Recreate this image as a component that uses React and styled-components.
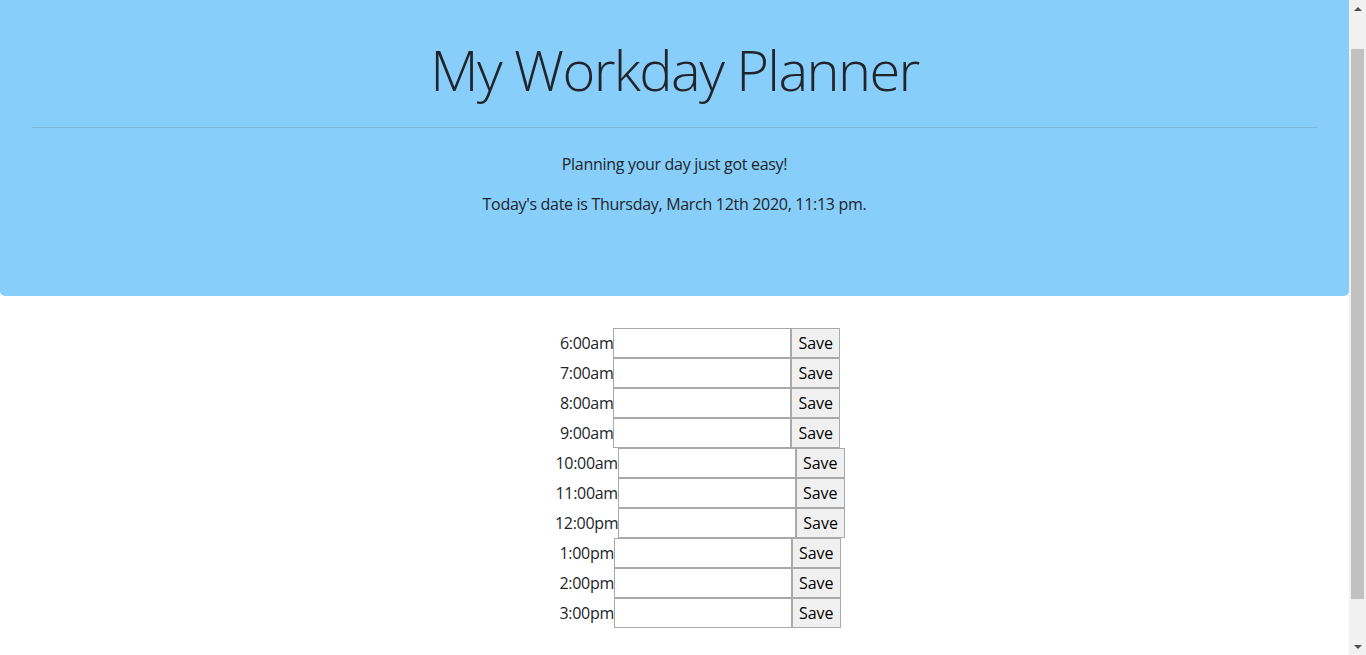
import React from "react";
import styled, { createGlobalStyle } from "styled-components";

const GlobalStyle = createGlobalStyle`
  html, body {
    margin: 0;
    padding: 0;
    background: #fff;
  }
  body {
    font-family: "Open Sans", "Noto Sans", "Liberation Sans", sans-serif;
    font-size: 16px;
    line-height: 1.5;
    color: #212529;
    letter-spacing: -0.3px;
  }
  * { box-sizing: border-box; }
`;

const Page = styled.div`
  padding-right: 17px;
`;

const Jumbotron = styled.header`
  background: #87cefa;
  padding: 36px 32px 64px;
  margin-bottom: 32px;
  border-radius: 0 0 4.8px 4.8px;
  text-align: center;
`;

const Title = styled.h1`
  margin: 0;
  font-size: 56px;
  font-weight: 300;
  line-height: 1.2;
  letter-spacing: -1.6px;
`;

const Divider = styled.hr`
  margin: 24px 0;
  border: 0;
  border-top: 1px solid rgba(0, 0, 0, 0.1);
`;

const Lead = styled.p`
  margin: 0 0 16px;
  font-size: 16px;
`;

const Planner = styled.main`
  display: flex;
  flex-direction: column;
  align-items: center;
  padding: 0 0 16px 51px;
`;

const Row = styled.div`
  display: flex;
  align-items: center;
  height: 30px;
`;

const HourLabel = styled.label`
  font-size: 16px;
  line-height: 30px;
`;

const TaskInput = styled.input`
  width: 178px;
  height: 30px;
  border: 1px solid #a9a9a9;
  background: #fff;
  padding: 1px 2px;
  font: inherit;
  margin: 0;
`;

const SaveButton = styled.button`
  height: 30px;
  padding: 1px 6px;
  border: 1px solid #a9a9a9;
  background: #f0f0f0;
  color: #000;
  font: inherit;
  line-height: 26px;
  margin: 0;
  cursor: pointer;
`;

/* Imitation of the classic browser scrollbar seen in the reference */
const ScrollTrack = styled.div`
  position: fixed;
  top: 0;
  right: 0;
  width: 17px;
  height: 100vh;
  background: #f1f1f1;
  display: flex;
  flex-direction: column;
  align-items: center;
`;

const ScrollArrow = styled.div`
  height: 17px;
  width: 17px;
  display: flex;
  align-items: center;
  justify-content: center;
`;

const ScrollThumb = styled.div`
  margin-top: 32px;
  width: 13px;
  height: 550px;
  background: #c1c1c1;
`;

const ScrollSpacer = styled.div`
  flex: 1;
`;

const hours = [
  "6:00am",
  "7:00am",
  "8:00am",
  "9:00am",
  "10:00am",
  "11:00am",
  "12:00pm",
  "1:00pm",
  "2:00pm",
  "3:00pm",
];

export default function App() {
  return (
    <Page>
      <GlobalStyle />
      <Jumbotron>
        <Title>My Workday Planner</Title>
        <Divider />
        <Lead>Planning your day just got easy!</Lead>
        <Lead>Today's date is Thursday, March 12th 2020, 11:13 pm.</Lead>
      </Jumbotron>
      <Planner>
        {hours.map((h) => (
          <Row key={h}>
            <HourLabel>{h}</HourLabel>
            <TaskInput type="text" />
            <SaveButton type="button">Save</SaveButton>
          </Row>
        ))}
      </Planner>
      <ScrollTrack aria-hidden="true">
        <ScrollArrow>
          <svg width="8" height="4" viewBox="0 0 8 4">
            <path d="M0 4 L4 0 L8 4 Z" fill="#505050" />
          </svg>
        </ScrollArrow>
        <ScrollThumb />
        <ScrollSpacer />
        <ScrollArrow>
          <svg width="8" height="4" viewBox="0 0 8 4">
            <path d="M0 0 L8 0 L4 4 Z" fill="#505050" />
          </svg>
        </ScrollArrow>
      </ScrollTrack>
    </Page>
  );
}
